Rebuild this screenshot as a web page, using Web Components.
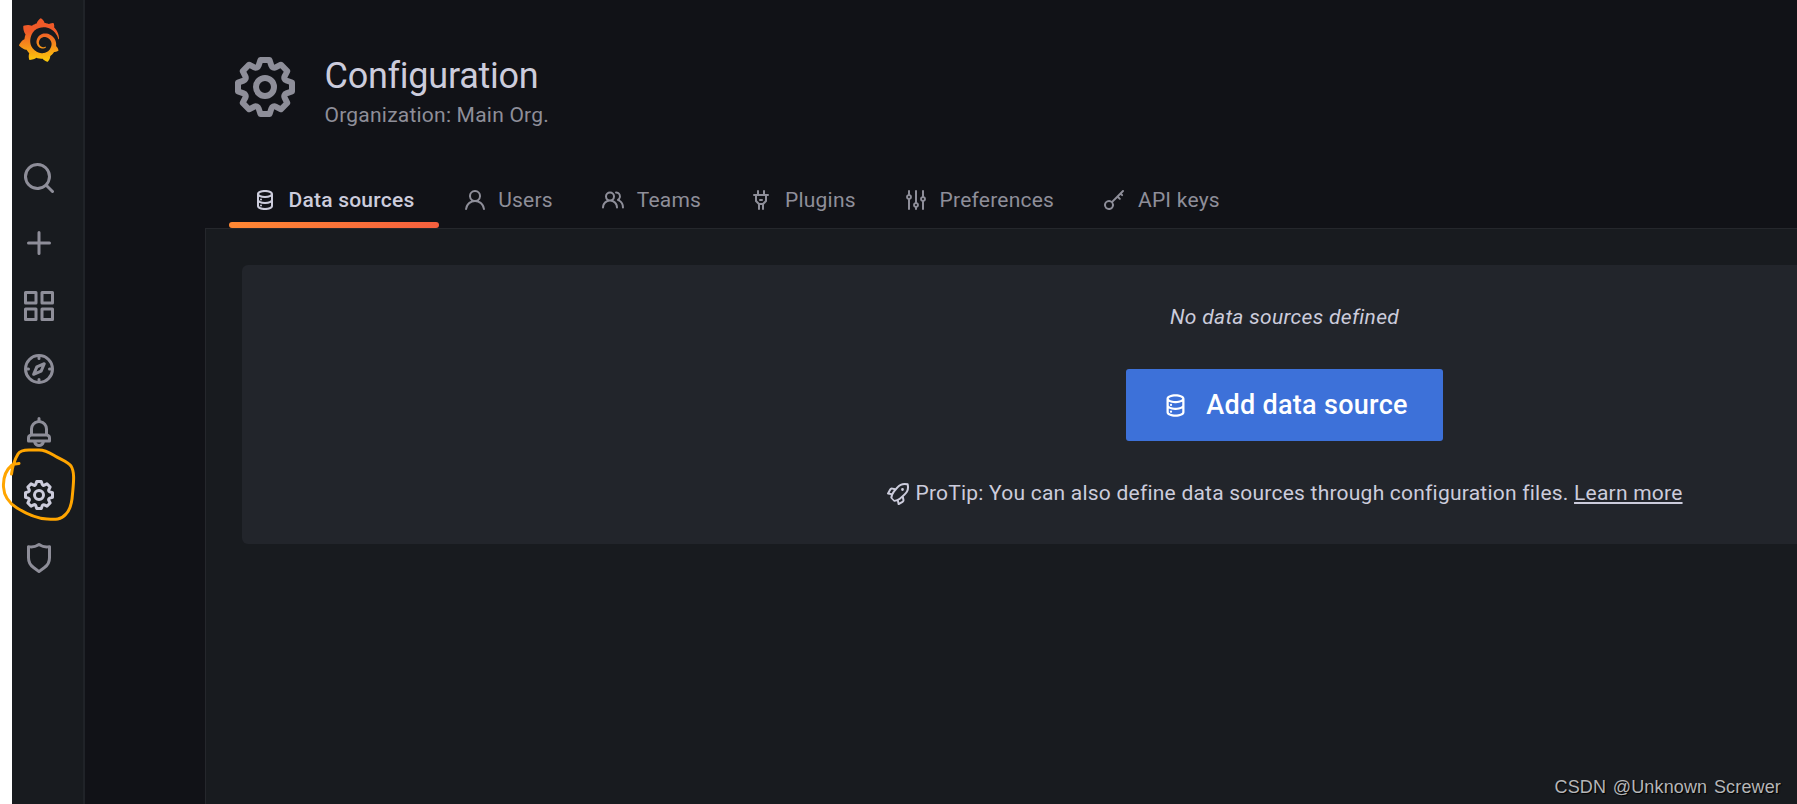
<!DOCTYPE html>
<html lang="en">
<head>
<meta charset="utf-8">
<title>Configuration: Data sources</title>
<style>
html, body {
    margin: 0;
    height: 100%;
    overflow: hidden;
}
body {
    background: #111217;
    color: #ccccdc;
    font: 400 21px/33px Roboto, "Liberation Sans", sans-serif;
    letter-spacing: 0.225px;
}
</style>
</head>
<body>
<config-page></config-page>
<script>
const ICONS = {
    search: 'M21.71,20.29,18,16.61A9,9,0,1,0,16.61,18l3.68,3.68a1,1,0,0,0,1.42,0A1,1,0,0,0,21.71,20.29ZM11,18a7,7,0,1,1,7-7A7,7,0,0,1,11,18Z',
    plus: 'M19,11H13V5a1,1,0,0,0-2,0v6H5a1,1,0,0,0,0,2h6v6a1,1,0,0,0,2,0V13h6a1,1,0,0,0,0-2Z',
    apps: 'M10,13H3a1,1,0,0,0-1,1v7a1,1,0,0,0,1,1h7a1,1,0,0,0,1-1V14A1,1,0,0,0,10,13ZM9,20H4V15H9ZM21,2H14a1,1,0,0,0-1,1v7a1,1,0,0,0,1,1h7a1,1,0,0,0,1-1V3A1,1,0,0,0,21,2ZM20,9H15V4h5Zm1,4H14a1,1,0,0,0-1,1v7a1,1,0,0,0,1,1h7a1,1,0,0,0,1-1V14A1,1,0,0,0,21,13Zm-1,7H15V15h5ZM10,2H3A1,1,0,0,0,2,3v7a1,1,0,0,0,1,1h7a1,1,0,0,0,1-1V3A1,1,0,0,0,10,2ZM9,9H4V4H9Z',
    compass: 'M12,2A10,10,0,1,0,22,12,10,10,0,0,0,12,2Zm1,17.93V19a1,1,0,0,0-2,0v.93A8,8,0,0,1,4.07,13H5a1,1,0,0,0,0-2H4.07A8,8,0,0,1,11,4.07V5a1,1,0,0,0,2,0V4.07A8,8,0,0,1,19.93,11H19a1,1,0,0,0,0,2h.93A8,8,0,0,1,13,19.93ZM15.14,7.55l-5,2.12a1,1,0,0,0-.52.52l-2.12,5a1,1,0,0,0,.21,1.1,1,1,0,0,0,.7.29.93.93,0,0,0,.4-.08l5-2.12a1,1,0,0,0,.52-.52l2.12-5a1,1,0,0,0-1.31-1.31Zm-2.49,5.1-2.28,1,1-2.28,2.28-1Z',
    bell: 'M18,13.18V10a6,6,0,0,0-5-5.91V3a1,1,0,0,0-2,0V4.09A6,6,0,0,0,6,10v3.18A3,3,0,0,0,4,16v2a1,1,0,0,0,1,1H8.14a4,4,0,0,0,7.72,0H19a1,1,0,0,0,1-1V16A3,3,0,0,0,18,13.18ZM8,10a4,4,0,0,1,8,0v3H8Zm4,10a2,2,0,0,1-1.72-1h3.44A2,2,0,0,1,12,20Zm6-3H6V16a1,1,0,0,1,1-1H17a1,1,0,0,1,1,1Z',
    cog: 'M21.32,9.55l-1.89-.63.89-1.78A1,1,0,0,0,20.13,6L18,3.87a1,1,0,0,0-1.15-.19l-1.78.89-.63-1.89A1,1,0,0,0,13.5,2h-3a1,1,0,0,0-.95.68L8.92,4.57,7.14,3.68A1,1,0,0,0,6,3.87L3.87,6a1,1,0,0,0-.19,1.15l.89,1.78-1.89.63A1,1,0,0,0,2,10.5v3a1,1,0,0,0,.68.95l1.89.63-.89,1.78A1,1,0,0,0,3.87,18L6,20.13a1,1,0,0,0,1.15.19l1.78-.89.63,1.89a1,1,0,0,0,.95.68h3a1,1,0,0,0,.95-.68l.63-1.89,1.78.89A1,1,0,0,0,18,20.13L20.13,18a1,1,0,0,0,.19-1.15l-.89-1.78,1.89-.63A1,1,0,0,0,22,13.5v-3A1,1,0,0,0,21.32,9.55ZM20,12.78l-1.2.4A2,2,0,0,0,17.64,16l.57,1.14-1.1,1.1L16,17.64a2,2,0,0,0-2.79,1.16l-.4,1.2H11.22l-.4-1.2A2,2,0,0,0,8,17.64l-1.14.57-1.1-1.1L6.36,16A2,2,0,0,0,5.2,13.18L4,12.78V11.22l1.2-.4A2,2,0,0,0,6.36,8L5.79,6.89l1.1-1.1L8,6.36A2,2,0,0,0,10.82,5.2l.4-1.2h1.56l.4,1.2A2,2,0,0,0,16,6.36l1.14-.57,1.1,1.1L17.64,8a2,2,0,0,0,1.16,2.79l1.2.4ZM12,8a4,4,0,1,0,4,4A4,4,0,0,0,12,8Zm0,6a2,2,0,1,1,2-2A2,2,0,0,1,12,14Z',
    shield: 'M19.63,3.65a1,1,0,0,0-.84-.2,8,8,0,0,1-6.22-1.27,1,1,0,0,0-1.14,0A8,8,0,0,1,5.21,3.45a1,1,0,0,0-.84.2A1,1,0,0,0,4,4.43v7.45a9,9,0,0,0,3.77,7.33l3.65,2.6a1,1,0,0,0,1.16,0l3.65-2.6A9,9,0,0,0,20,11.88V4.43A1,1,0,0,0,19.63,3.65ZM18,11.88a7,7,0,0,1-2.93,5.7L12,19.77,8.93,17.58A7,7,0,0,1,6,11.88V5.58a10,10,0,0,0,6-1.39,10,10,0,0,0,6,1.39Z',
    database: 'M8,16.5a1,1,0,1,0,1,1A1,1,0,0,0,8,16.5ZM12,2C8,2,4,3.37,4,6V18c0,2.63,4,4,8,4s8-1.37,8-4V6C20,3.37,16,2,12,2Zm6,16c0,.71-2.28,2-6,2s-6-1.29-6-2V14.73A13.16,13.16,0,0,0,12,16a13.16,13.16,0,0,0,6-1.27Zm0-6c0,.71-2.28,2-6,2s-6-1.29-6-2V8.73A13.16,13.16,0,0,0,12,10a13.16,13.16,0,0,0,6-1.27ZM12,8C8.28,8,6,6.71,6,6s2.28-2,6-2,6,1.29,6,2S15.72,8,12,8ZM8,10.5a1,1,0,1,0,1,1A1,1,0,0,0,8,10.5Z',
    user: 'M15.71,12.71a6,6,0,1,0-7.42,0,10,10,0,0,0-6.22,8.18,1,1,0,0,0,2,.22,8,8,0,0,1,15.9,0,1,1,0,0,0,1,.89h.11a1,1,0,0,0,.88-1.1A10,10,0,0,0,15.71,12.71ZM12,12a4,4,0,1,1,4-4A4,4,0,0,1,12,12Z',
    users: 'M12.3,12.22A4.92,4.92,0,0,0,14,8.5a5,5,0,0,0-10,0,4.92,4.92,0,0,0,1.7,3.72A8,8,0,0,0,1,19.5a1,1,0,0,0,2,0,6,6,0,0,1,12,0,1,1,0,0,0,2,0A8,8,0,0,0,12.3,12.22ZM9,11.5a3,3,0,1,1,3-3A3,3,0,0,1,9,11.5Zm9.74.32A5,5,0,0,0,15,3.5a1,1,0,0,0,0,2,3,3,0,0,1,3,3,3,3,0,0,1-1.5,2.59,1,1,0,0,0-.5.84,1,1,0,0,0,.45.86l.39.26.13.07a7,7,0,0,1,4,6.38,1,1,0,0,0,2,0A9,9,0,0,0,18.74,11.82Z',
    plug: 'M19,6H16V3a1,1,0,0,0-2,0V6H10V3A1,1,0,0,0,8,3V6H5A1,1,0,0,0,5,8H6v5a1,1,0,0,0,.29.71L9,16.41V21a1,1,0,0,0,2,0V17h2v4a1,1,0,0,0,2,0V16.41l2.71-2.7A1,1,0,0,0,18,13V8h1a1,1,0,0,0,0-2Zm-3,6.59L13.59,15H10.41L8,12.59V8h8ZM11,13h2a1,1,0,0,0,0-2H11a1,1,0,0,0,0,2Z',
    sliders: 'M20,8.18V3a1,1,0,0,0-2,0V8.18a3,3,0,0,0,0,5.64V21a1,1,0,0,0,2,0V13.82a3,3,0,0,0,0-5.64ZM19,12a1,1,0,1,1,1-1A1,1,0,0,1,19,12Zm-6,2.18V3a1,1,0,0,0-2,0V14.18a3,3,0,0,0,0,5.64V21a1,1,0,0,0,2,0V19.82a3,3,0,0,0,0-5.64ZM12,18a1,1,0,1,1,1-1A1,1,0,0,1,12,18ZM6,6.18V3A1,1,0,0,0,4,3V6.18a3,3,0,0,0,0,5.64V21a1,1,0,0,0,2,0V11.82A3,3,0,0,0,6,6.18ZM5,10A1,1,0,1,1,6,9,1,1,0,0,1,5,10Z',
    key: 'M21.71,2.29a1,1,0,0,0-1.42,0l-10.6,10.6a5,5,0,1,0,1.42,1.42L15.5,9.91l1.65,1.65a1,1,0,0,0,1.41-1.41L16.91,8.5l1.59-1.59.95.95a1,1,0,0,0,1.41-1.41L19.91,5.5l1.8-1.8A1,1,0,0,0,21.71,2.29ZM7,20a3,3,0,1,1,3-3A3,3,0,0,1,7,20Z',
    rocket: 'M22.601,2.062a1,1,0,0,0-.713-.713A11.252,11.252,0,0,0,10.47,4.972L9.354,6.296,6.75,5.668a2.777,2.777,0,0,0-3.387,1.357l-2.2,3.9a1,1,0,0,0,.661,1.469l3.074.659a13.42,13.42,0,0,0-.555,2.434,1,1,0,0,0,.284.836l3.1,3.1a1,1,0,0,0,.794.289,12.169,12.169,0,0,0,2.492-.49l.644,3.004a1,1,0,0,0,1.469.661l3.905-2.202a3.035,3.035,0,0,0,1.375-3.304l-.668-2.76,1.237-1.137A11.204,11.204,0,0,0,22.601,2.062ZM3.572,10.723l1.556-2.76a.826.826,0,0,1,1.07-.375l1.718.416-.65.772a13.095,13.095,0,0,0-1.59,2.398ZM16.042,18.945,13.286,20.499l-.459-2.14a13.09,13.09,0,0,0,2.417-1.636l.75-.69.41,1.7A1.063,1.063,0,0,1,16.042,18.945ZM17.674,11.986l-4.428,4.054a10.843,10.843,0,0,1-4.784,1.97l-2.07-2.07a10.957,10.957,0,0,1,2.43-5.84L12.008,6.263a9.287,9.287,0,0,1,8.785-3.006A9.207,9.207,0,0,1,17.674,11.986ZM16.5,6.1a1.4,1.4,0,1,0,1.4,1.4A1.4,1.4,0,0,0,16.5,6.1Z'
};

class UiIcon extends HTMLElement {
    connectedCallback() {
        const size = this.getAttribute('size') ?? 24;
        this.attachShadow({mode: 'open'}).innerHTML = `
<style>
:host { display: inline-block; flex: none; width: ${size}px; height: ${size}px; }
svg { display: block; fill: currentColor; }
</style>
<svg viewBox="0 0 24 24" width="${size}" height="${size}"><path fill-rule="evenodd" d="${ICONS[this.getAttribute('name')]}"/></svg>`;
    }
}
customElements.define('ui-icon', UiIcon);


const BrandLogoTemplate = document.createElement('template');
BrandLogoTemplate.innerHTML = `
<style>
:host { display: block; width: 42px; height: 44px; }
svg { display: block; }
</style>
<svg viewBox="0 0 351 365" width="42" height="44">
<linearGradient id="sun" gradientUnits="userSpaceOnUse" x1="175.5" y1="445.4" x2="175.5" y2="114">
<stop offset="0" stop-color="#fff100"/><stop offset="1" stop-color="#f05a28"/>
</linearGradient>
<path fill="url(#sun)" d="M342,161.2c-0.6-6.1-1.6-13.1-3.6-20.9c-2-7.7-5-16.2-9.4-25c-4.4-8.8-10.1-17.9-17.5-26.8c-2.9-3.5-6.1-6.9-9.5-10.2c5.1-20.3-6.2-37.9-6.2-37.9c-19.5-1.2-31.9,6.1-36.5,9.4c-0.8-0.3-1.5-0.7-2.3-1c-3.3-1.3-6.7-2.6-10.3-3.7c-3.5-1.1-7.1-2.1-10.8-3c-3.7-0.9-7.4-1.6-11.2-2.2c-0.7-0.1-1.3-0.2-2-0.3c-8.5-27.2-32.9-38.6-32.9-38.6c-27.3,17.3-32.4,41.5-32.4,41.5s-0.1,0.5-0.3,1.4c-1.5,0.4-3,0.9-4.5,1.3c-2.1,0.6-4.2,1.4-6.2,2.2c-2.1,0.8-4.1,1.6-6.2,2.5c-4.1,1.8-8.2,3.8-12.2,6c-3.9,2.2-7.7,4.6-11.4,7.1c-0.5-0.2-1-0.4-1-0.4c-37.8-14.4-71.3,2.9-71.3,2.9c-3.1,40.2,15.1,65.5,18.7,70.1c-0.9,2.5-1.7,5-2.5,7.5c-2.8,9.1-4.9,18.4-6.2,28.1c-0.2,1.4-0.4,2.8-0.5,4.2C18.8,192.7,8.5,228,8.5,228c29.1,33.5,63.1,35.6,63.1,35.6c0,0,0.1-0.1,0.1-0.1c4.3,7.7,9.3,15,14.9,21.9c2.4,2.9,4.8,5.6,7.4,8.3c-10.6,30.4,1.5,55.6,1.5,55.6c32.4,1.2,53.7-14.2,58.2-17.7c3.2,1.1,6.5,2.1,9.8,2.9c10,2.6,20.2,4.1,30.4,4.5c2.5,0.1,5.1,0.2,7.6,0.1l1.2,0l0.8,0l1.6,0l1.6-0.1l0,0.1c15.3,21.8,42.1,24.9,42.1,24.9c19.1-20.1,20.2-40.1,20.2-44.4l0,0c0,0,0-0.1,0-0.3c0-0.4,0-0.6,0-0.6l0,0c0-0.3,0-0.6,0-0.9c4-2.8,7.8-5.8,11.4-9.1c7.6-6.9,14.3-14.8,19.9-23.3c0.5-0.8,1-1.6,1.5-2.4c21.6,1.2,36.9-13.4,36.9-13.4c-3.6-22.5-16.4-33.5-19.1-35.6l-0.5-0.4l-0.5-0.3c0.1-1.4,0.2-2.7,0.3-4.1c0.2-2.4,0.2-4.9,0.2-7.3l0-1.8l0-0.9l0-0.5l0-0.6l-0.1-1.5l-0.1-2c0-0.7-0.1-1.3-0.2-1.9c-0.1-0.6-0.1-1.3-0.2-1.9l-0.2-1.9l-0.3-1.9c-0.4-2.5-0.8-4.9-1.4-7.4c-2.3-9.7-6.1-18.9-11-27.2c-5-8.3-11.2-15.6-18.3-21.8c-7-6.2-14.9-11.2-23.1-14.9c-8.3-3.7-16.9-6.1-25.5-7.2c-4.3-0.6-8.6-0.8-12.9-0.7l-1.6,0l-0.4,0l-0.5,0l-0.7,0l-1.6,0.1c-0.6,0-1.2,0.1-1.7,0.1c-2.2,0.2-4.4,0.5-6.5,0.9c-8.6,1.6-16.7,4.7-23.8,9c-7.1,4.3-13.3,9.6-18.3,15.6c-5,6-8.9,12.7-11.6,19.6c-2.7,6.9-4.2,14.1-4.6,21c-0.1,1.7-0.1,3.5-0.1,5.2c0,0.4,0,0.9,0,1.3l0.1,1.4c0.1,0.8,0.1,1.7,0.2,2.5c0.3,3.5,1,6.9,1.9,10.1c1.9,6.5,4.9,12.4,8.6,17.4c3.7,5,8.2,9.1,12.9,12.4c4.7,3.2,9.8,5.5,14.8,7c5,1.5,10,2.1,14.7,2.1c0.6,0,1.2,0,1.7,0c0.3,0,0.6,0,0.9,0c0.3,0,0.6,0,0.9-0.1c0.5,0,1-0.1,1.5-0.1c0.1,0,0.3,0,0.4-0.1l0.5-0.1c0.3,0,0.6-0.1,0.9-0.1c0.6-0.1,1.1-0.2,1.7-0.3c0.6-0.1,1.1-0.2,1.6-0.4c1.1-0.2,2.1-0.6,3.1-0.9c2-0.7,4-1.5,5.7-2.4c1.8-0.9,3.4-2,5-3c0.4-0.3,0.9-0.6,1.3-1c1.6-1.3,1.9-3.7,0.6-5.3c-1.1-1.4-3.1-1.8-4.7-0.9c-0.4,0.2-0.8,0.4-1.2,0.6c-1.4,0.7-2.8,1.3-4.3,1.8c-1.5,0.5-3.1,0.9-4.7,1.2c-0.8,0.1-1.6,0.2-2.5,0.3c-0.4,0-0.8,0.1-1.3,0.1c-0.4,0-0.9,0-1.2,0c-0.4,0-0.8,0-1.2,0c-0.5,0-1,0-1.5-0.1l-0.3,0l-0.3,0c-0.2,0-0.5,0-0.7-0.1c-0.5-0.1-0.9-0.1-1.4-0.2c-3.7-0.5-7.4-1.6-10.9-3.2c-3.6-1.6-7-3.8-10.1-6.6c-3.1-2.8-5.8-6.1-7.9-9.9c-2.1-3.8-3.6-8-4.3-12.4c-0.3-2.2-0.5-4.5-0.4-6.7c0-0.6,0.1-1.2,0.1-1.8l0-0.3l0-0.5c0-0.3,0.1-0.6,0.1-0.9c0.1-1.2,0.3-2.4,0.5-3.6c1.7-9.6,6.5-19,13.9-26.1c1.9-1.8,3.9-3.4,6-4.9c2.1-1.5,4.4-2.8,6.8-3.9c2.4-1.1,4.8-2,7.4-2.7c2.5-0.7,5.1-1.1,7.8-1.4c1.3-0.1,2.6-0.2,4-0.2c0.4,0,0.6,0,0.9,0l1.1,0l0.7,0l0.4,0l1.1,0.1c2.9,0.2,5.7,0.6,8.5,1.3c5.6,1.2,11.1,3.3,16.2,6.1c10.2,5.7,18.9,14.5,24.2,25.1c2.7,5.3,4.6,11,5.5,16.9c0.2,1.5,0.4,3,0.5,4.5l0.1,1.1l0.1,1.1c0,0.4,0,0.8,0,1.1c0,0.4,0,0.8,0,1.1l0,1l0,1.1c0,0.7-0.1,1.9-0.1,2.6c-0.1,1.6-0.3,3.3-0.5,4.9c-0.2,1.6-0.5,3.2-0.8,4.8c-0.3,1.6-0.7,3.2-1.1,4.7c-0.8,3.1-1.8,6.2-3,9.3c-2.4,6-5.6,11.8-9.4,17.1c-7.7,10.6-18.2,19.2-30.2,24.7c-6,2.7-12.3,4.7-18.8,5.7c-3.2,0.6-6.5,0.9-9.8,1l-0.6,0l-0.5,0l-1.1,0l-1.6,0l-0.8,0l-0.4,0c-1.8,0-3.5-0.1-5.3-0.3c-7-0.5-13.9-1.8-20.7-3.7c-6.7-1.9-13.2-4.6-19.4-7.8c-12.3-6.6-23.4-15.6-32-26.5c-4.3-5.4-8.1-11.3-11.2-17.4c-3.1-6.1-5.6-12.6-7.4-19.1c-1.8-6.6-2.9-13.3-3.4-20.1l-0.1-1.3l0-0.3l0-0.3l0-0.6l0-1.1l0-0.3l0-0.4l0-0.8l0-1.6l0-0.3l0-0.7c0-0.8,0-1.7,0-2.5c0.1-3.3,0.4-6.8,0.8-10.2c0.4-3.4,1-6.9,1.7-10.3c0.7-3.4,1.5-6.8,2.5-10.2c1.9-6.7,4.3-13.2,7.1-19.3c5.7-12.2,13.1-23.1,22-31.8c2.2-2.2,4.5-4.2,6.9-6.2c2.4-1.9,4.9-3.7,7.5-5.4c2.5-1.7,5.2-3.2,7.9-4.6c1.3-0.7,2.7-1.4,4.1-2c0.7-0.3,1.4-0.6,2.1-0.9c0.7-0.3,1.4-0.6,2.1-0.9c2.8-1.2,5.7-2.2,8.7-3.1c0.7-0.2,1.5-0.4,2.2-0.7c0.7-0.2,1.5-0.4,2.2-0.6c1.5-0.4,3-0.8,4.5-1.1c0.7-0.2,1.5-0.3,2.3-0.5c0.8-0.2,1.5-0.3,2.3-0.5c0.8-0.1,1.5-0.3,2.3-0.4l1.1-0.2l1.2-0.2c0.8-0.1,1.5-0.2,2.3-0.3c0.9-0.1,1.7-0.2,2.6-0.3c0.7-0.1,1.9-0.2,2.6-0.3c0.5-0.1,1.1-0.1,1.6-0.2l1.1-0.1l0.5-0.1l0.6,0c0.9-0.1,1.7-0.1,2.6-0.2l1.3-0.1l0.4,0l0.6,0c0.7,0,1.5-0.1,2.2-0.1c2.9-0.1,5.9-0.1,8.8,0c5.8,0.2,11.5,0.9,17,1.9c11.1,2.1,21.5,5.6,31,10.3c9.5,4.6,17.9,10.3,25.3,16.5c0.5,0.4,0.9,0.8,1.4,1.2c0.4,0.4,0.9,0.8,1.3,1.2c0.9,0.8,1.7,1.6,2.6,2.4c0.9,0.8,1.7,1.6,2.5,2.4c0.8,0.8,1.6,1.6,2.4,2.5c3.1,3.3,6,6.6,8.6,10c5.2,6.7,9.4,13.5,12.7,19.9c0.2,0.4,0.4,0.8,0.6,1.2c0.2,0.4,0.4,0.8,0.6,1.2c0.4,0.8,0.8,1.6,1.1,2.4c0.4,0.8,0.7,1.5,1.1,2.3c0.3,0.8,0.7,1.5,1,2.3c1.2,3,2.4,5.9,3.3,8.6c1.5,4.4,2.6,8.3,3.5,11.7c0.3,1.4,1.6,2.3,3,2.1c1.5-0.1,2.6-1.3,2.6-2.8C342.6,170.4,342.5,166.1,342,161.2z"/>
</svg>
`;

class BrandLogo extends HTMLElement {
    connectedCallback() {
        this.attachShadow({mode: 'open'}).append(BrandLogoTemplate.content.cloneNode(true));
    }
}
customElements.define('brand-logo', BrandLogo);


const SideMenuTemplate = document.createElement('template');
SideMenuTemplate.innerHTML = `
<style>
:host {
    display: block;
    box-sizing: border-box;
    width: 73px;
    flex: none;
    padding: 18px 0 0 9px;
    background: #181b1f;
    border-right: 2px solid #202328;
    color: #8e8e99;
}
brand-logo { margin-left: -3px; }
#search { display: block; margin-top: 98px; }
nav {
    display: grid;
    justify-items: start;
    gap: 27px;
    margin-top: 29px;
}
[active] { color: #ccccdc; }
</style>
<brand-logo></brand-logo>
<ui-icon id="search" name="search" size="36"></ui-icon>
<nav>
    <ui-icon name="plus" size="36"></ui-icon>
    <ui-icon name="apps" size="36"></ui-icon>
    <ui-icon name="compass" size="36"></ui-icon>
    <ui-icon name="bell" size="36"></ui-icon>
    <ui-icon name="cog" size="36" active></ui-icon>
    <ui-icon name="shield" size="36"></ui-icon>
</nav>
`;

class SideMenu extends HTMLElement {
    connectedCallback() {
        this.attachShadow({mode: 'open'}).append(SideMenuTemplate.content.cloneNode(true));
    }
}
customElements.define('side-menu', SideMenu);


const PageHeaderTemplate = document.createElement('template');
PageHeaderTemplate.innerHTML = `
<style>
:host {
    display: flex;
    gap: 23.5px;
    padding: 51px 0 0 144px;
    height: 121px;
}
ui-icon { color: #8e8e99; }
h1 {
    margin: 4px 0 0;
    font-size: 36px;
    font-weight: 400;
    line-height: 42px;
    letter-spacing: -0.25px;
}
#sub {
    margin-top: 2px;
    color: #8e8e99;
}
</style>
<ui-icon size="72" name="cog"></ui-icon>
<div>
    <h1><slot name="title"></slot></h1>
    <div id="sub"><slot></slot></div>
</div>
`;

class PageHeader extends HTMLElement {
    connectedCallback() {
        this.attachShadow({mode: 'open'}).append(PageHeaderTemplate.content.cloneNode(true));
    }
}
customElements.define('page-header', PageHeader);


class NavTab extends HTMLElement {
    connectedCallback() {
        this.attachShadow({mode: 'open'}).innerHTML = `
<style>
:host {
    display: flex;
    align-items: center;
    gap: 11.5px;
    box-sizing: border-box;
    height: 56px;
    padding: 0 24.3px 0 24px;
    position: relative;
    color: #8e8e99;
    white-space: nowrap;
}
:host([selected]) {
    color: #ccccdc;
    font-weight: 500;
}
/* Gradient bar under the current tab */
:host([selected])::after {
    content: "";
    position: absolute;
    left: 0;
    right: 0;
    bottom: 0;
    height: 6px;
    border-radius: 3px;
    background: linear-gradient(90deg, #ff8833, #f55f3e);
}
</style>
<ui-icon name="${this.getAttribute('icon')}"></ui-icon>
<slot></slot>`;
    }
}
customElements.define('nav-tab', NavTab);


const ActionButtonTemplate = document.createElement('template');
ActionButtonTemplate.innerHTML = `
<style>
:host { display: block; }
button {
    display: flex;
    align-items: center;
    height: 72px;
    padding: 0 35px 0 36px;
    gap: 17px;
    border: 0;
    border-radius: 3px;
    background: #3d71d9;
    color: #fff;
    font: 500 27px/72px Roboto, "Liberation Sans", sans-serif;
    letter-spacing: 0.3px;
}
</style>
<button><ui-icon name="database" size="27"></ui-icon><slot></slot></button>
`;

class ActionButton extends HTMLElement {
    connectedCallback() {
        this.attachShadow({mode: 'open'}).append(ActionButtonTemplate.content.cloneNode(true));
    }
}
customElements.define('action-button', ActionButton);


const EmptyCardTemplate = document.createElement('template');
EmptyCardTemplate.innerHTML = `
<style>
:host {
    display: flex;
    flex-direction: column;
    align-items: center;
    box-sizing: border-box;
    width: 2085px;
    height: 279px;
    padding-top: 36px;
    border-radius: 6px;
    background: #22252b;
}
#title {
    font-style: italic;
    letter-spacing: 0.32px;
}
action-button { margin: 35px 0 36px; }
#tip {
    display: flex;
    align-items: center;
    gap: 5px;
}
a {
    text-decoration: underline 2px;
    text-underline-offset: 2px;
}
</style>
<div id="title">No data sources defined</div>
<action-button>Add data source</action-button>
<div id="tip">
    <ui-icon name="rocket"></ui-icon>
    <span>ProTip: You can also define data sources through configuration files. <a>Learn more</a></span>
</div>
`;

class EmptyCard extends HTMLElement {
    connectedCallback() {
        this.attachShadow({mode: 'open'}).append(EmptyCardTemplate.content.cloneNode(true));
    }
}
customElements.define('empty-card', EmptyCard);


const ConfigPageTemplate = document.createElement('template');
ConfigPageTemplate.innerHTML = `
<style>
:host {
    display: flex;
    box-sizing: border-box;
    height: 100vh;
    border-left: 12px solid #fff;
    overflow: hidden;
}
main {
    flex: 1;
    min-width: 0;
    display: flex;
    flex-direction: column;
}
#tabs {
    display: flex;
    padding-left: 144px;
}
#content {
    flex: 1;
    margin-left: 120px;
    padding: 36px;
    border: solid #25272c;
    border-width: 1px 0 0 1px;
    background: #181b1f;
}
/* Hand-drawn ring round the settings icon */
#ring {
    position: absolute;
    left: 0;
    top: 440px;
    fill: none;
    stroke: #ffa500;
    stroke-width: 3;
    stroke-linecap: round;
    stroke-linejoin: round;
}
#watermark {
    position: absolute;
    right: 16px;
    bottom: 4px;
    color: #b5b6b8;
    font: 18px/26px "Liberation Sans", sans-serif;
    letter-spacing: 0.15px;
    word-spacing: 1.5px;
    text-shadow: 1px 1px 1px #000;
}
</style>
<side-menu></side-menu>
<main>
    <page-header><span slot="title">Configuration</span>Organization: Main Org.</page-header>
    <div id="tabs">
        <nav-tab icon="database" selected>Data sources</nav-tab>
        <nav-tab icon="user">Users</nav-tab>
        <nav-tab icon="users">Teams</nav-tab>
        <nav-tab icon="plug">Plugins</nav-tab>
        <nav-tab icon="sliders">Preferences</nav-tab>
        <nav-tab icon="key">API keys</nav-tab>
    </div>
    <div id="content"><empty-card></empty-card></div>
</main>
<svg id="ring" width="84" height="90" viewBox="0 440 84 90"><path d="M11.500,474C12.500,466 15,459 18,454C20,450.500 24,450 29,450H39C46,450 50,453 55,456C62,460 68,462 71,466C75,472 73.500,483 72.500,494C72,502 71,509 66,514C61,520 55,519.500 47,519C35,518.500 25,513 17,508C9,503 4,497 3.500,487C3,478 6,470 12,465C14,463.800 16,463.600 19,463.400"/></svg>
<div id="watermark">CSDN @Unknown Screwer</div>
`;

class ConfigPage extends HTMLElement {
    connectedCallback() {
        this.attachShadow({mode: 'open'}).append(ConfigPageTemplate.content.cloneNode(true));
    }
}
customElements.define('config-page', ConfigPage);
</script>
</body>
</html>
